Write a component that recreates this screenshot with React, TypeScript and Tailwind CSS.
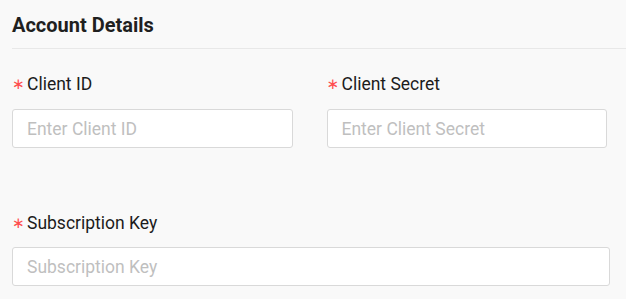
import React from "react";

function Field({
  label,
  placeholder,
  className = "",
  gap = "mt-[13px]",
}: {
  label: string;
  placeholder: string;
  className?: string;
  gap?: string;
}) {
  return (
    <div className={className}>
      <label className="flex h-6 items-center text-[17.5px] leading-6 text-[#1c1c1c]">
        <span className="mr-[6px] w-[9px] text-[15px] text-[#ff4d4f] [font-family:'DejaVu_Sans',sans-serif]">∗</span>
        {label}
      </label>
      <input
        placeholder={placeholder}
        className={`${gap} block h-[39px] w-full rounded-[3px] border border-[#d9d9d9] bg-white px-[14px] text-[17.5px] text-[#262626] outline-none placeholder:text-[#bfbfbf]`}
      />
    </div>
  );
}

export default function App() {
  return (
    <div className="h-[299px] w-[626px] overflow-hidden bg-[#f9f9f9] pl-3 [font-family:Roboto,'Liberation_Sans',sans-serif]">
      <div className="border-b border-[#e8e8e8] pt-[11px] pb-[9px]">
        <h2 className="text-[20px] leading-7 font-bold text-[#1f1f1f]">Account Details</h2>
      </div>

      <div className="mt-[23px] grid w-[595px] grid-cols-2 gap-x-[34px]">
        <Field label="Client ID" placeholder="Enter Client ID" />
        <Field label="Client Secret" placeholder="Enter Client Secret" />
      </div>

      <Field
        label="Subscription Key"
        placeholder="Subscription Key"
        gap="mt-[12px]"
        className="mt-[63px] w-[598px]"
      />
    </div>
  );
}
